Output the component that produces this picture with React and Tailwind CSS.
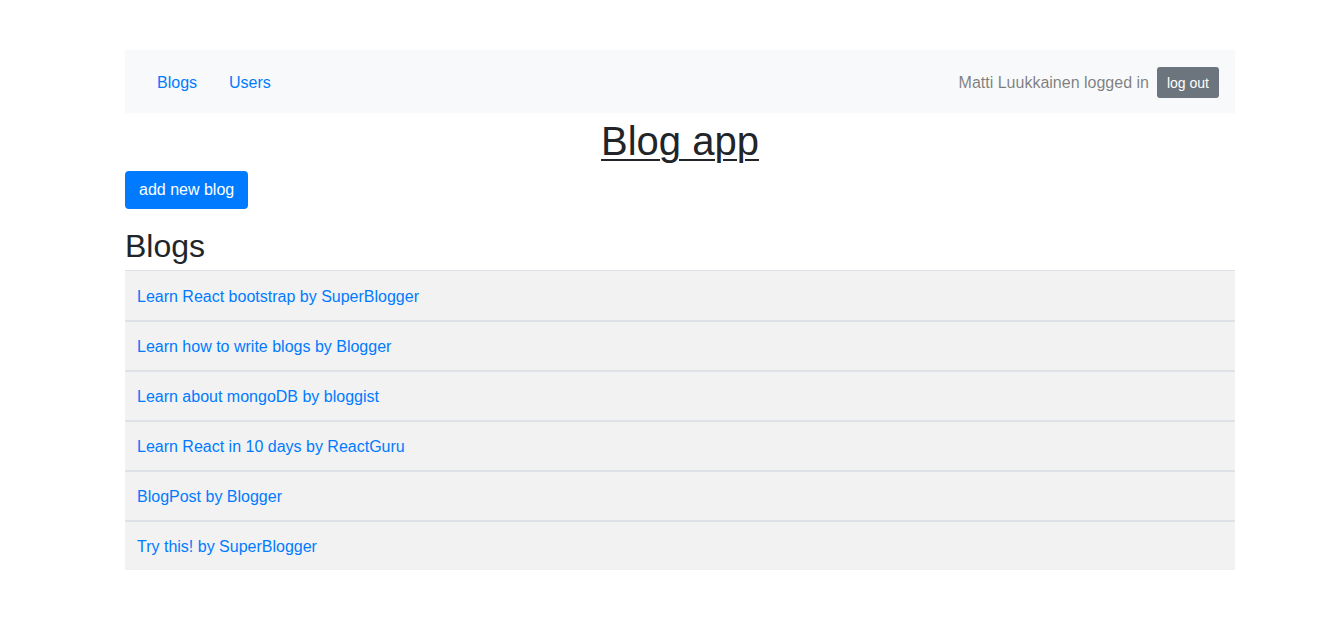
import React from "react";

const blogs = [
  { title: "Learn React bootstrap", author: "SuperBlogger" },
  { title: "Learn how to write blogs", author: "Blogger" },
  { title: "Learn about mongoDB", author: "bloggist" },
  { title: "Learn React in 10 days", author: "ReactGuru" },
  { title: "BlogPost", author: "Blogger" },
  { title: "Try this!", author: "SuperBlogger" },
];

export default function App() {
  return (
    <div className="min-h-screen bg-white text-[#212529] font-['Liberation_Sans',Arial,sans-serif]">
      <div className="ml-[125px] w-[1110px] pt-[50px]">
        {/* Navbar */}
        <nav className="h-[63px] bg-[#f8f9fa] px-4 pt-[2px] flex items-center justify-between">
          <div className="flex">
            <a href="#" className="px-4 text-base leading-6 text-[#007bff]">Blogs</a>
            <a href="#" className="px-4 text-base leading-6 text-[#007bff]">Users</a>
          </div>
          <div className="flex items-center gap-2">
            <span className="text-base text-black/50">Matti Luukkainen logged in</span>
            <button className="h-[31px] px-[10px] text-sm text-white bg-[#6c757d] rounded-[3px]">log out</button>
          </div>
        </nav>

        <h1 className="mt-[4px] h-[48px] mb-[6px] text-[40px] leading-[48px] text-center underline underline-offset-[4px] decoration-2">
          Blog app
        </h1>

        <button className="h-[38px] px-[14px] text-base text-white bg-[#007bff] rounded-[4px]">add new blog</button>

        <h2 className="mt-[18px] h-[38px] mb-[5px] text-[32px] leading-[38px]">Blogs</h2>

        <div className="border-t border-[#dee2e6]">
          {blogs.map((b, i) => (
            <div
              key={i}
              className={`bg-[#f2f2f2] px-3 pt-[2px] flex items-center text-base text-[#007bff] ${i === 0 ? "h-[49px]" : "h-[50px] border-t-2 border-[#dee2e6]"}`}
            >
              <a href="#">{b.title} by {b.author}</a>
            </div>
          ))}
        </div>
      </div>
    </div>
  );
}
